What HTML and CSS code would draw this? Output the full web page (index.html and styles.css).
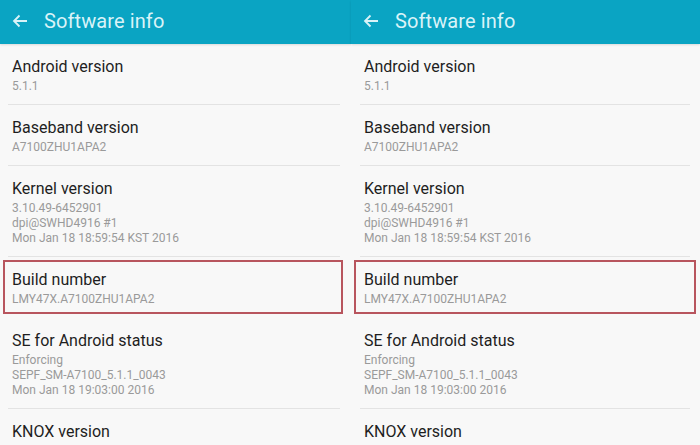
FILE: index.html
```html
<!DOCTYPE html>
<html lang="en">
<head>
    <meta charset="UTF-8">
    <meta name="viewport" content="width=device-width, initial-scale=1.0">
    <title>Software info</title>
    <link rel="stylesheet" href="styles.css">
</head>
<body>

<div class="screens">
    <section class="screen screen-left">
        <header class="appbar">
            <svg class="back" width="16" height="14" viewBox="0 0 16 14">
                <path d="M15 7H2M7.5 1.5L2 7l5.5 5.5" fill="none" stroke="currentColor" stroke-width="1.8"/>
            </svg>
            <h1>Software info</h1>
        </header>
        <ul class="info-list">
            <li class="info-row">
                <div class="info-title">Android version</div>
                <div class="info-value">5.1.1</div>
            </li>
            <li class="info-row">
                <div class="info-title">Baseband version</div>
                <div class="info-value">A7100ZHU1APA2</div>
            </li>
            <li class="info-row">
                <div class="info-title">Kernel version</div>
                <div class="info-value">3.10.49-6452901<br>dpi@SWHD4916 #1<br>Mon Jan 18 18:59:54 KST 2016</div>
            </li>
            <li class="info-row highlighted">
                <div class="info-title">Build number</div>
                <div class="info-value">LMY47X.A7100ZHU1APA2</div>
            </li>
            <li class="info-row">
                <div class="info-title">SE for Android status</div>
                <div class="info-value">Enforcing<br>SEPF_SM-A7100_5.1.1_0043<br>Mon Jan 18 19:03:00 2016</div>
            </li>
            <li class="info-row">
                <div class="info-title">KNOX version</div>
            </li>
        </ul>
    </section>

    <section class="screen screen-right">
        <header class="appbar">
            <svg class="back" width="16" height="14" viewBox="0 0 16 14">
                <path d="M15 7H2M7.5 1.5L2 7l5.5 5.5" fill="none" stroke="currentColor" stroke-width="1.8"/>
            </svg>
            <h1>Software info</h1>
        </header>
        <ul class="info-list">
            <li class="info-row">
                <div class="info-title">Android version</div>
                <div class="info-value">5.1.1</div>
            </li>
            <li class="info-row">
                <div class="info-title">Baseband version</div>
                <div class="info-value">A7100ZHU1APA2</div>
            </li>
            <li class="info-row">
                <div class="info-title">Kernel version</div>
                <div class="info-value">3.10.49-6452901<br>dpi@SWHD4916 #1<br>Mon Jan 18 18:59:54 KST 2016</div>
            </li>
            <li class="info-row highlighted">
                <div class="info-title">Build number</div>
                <div class="info-value">LMY47X.A7100ZHU1APA2</div>
            </li>
            <li class="info-row">
                <div class="info-title">SE for Android status</div>
                <div class="info-value">Enforcing<br>SEPF_SM-A7100_5.1.1_0043<br>Mon Jan 18 19:03:00 2016</div>
            </li>
            <li class="info-row">
                <div class="info-title">KNOX version</div>
            </li>
        </ul>
    </section>
</div>

</body>
</html>
```

FILE: styles.css
```css
body {
    margin: 0;
    padding: 0;
    font-family: Roboto, "Noto Sans", sans-serif;
    background-color: #f8f8f8;
    overflow: hidden;
}

.screens {
    display: grid;
    grid-template-columns: 351px 1fr;
    height: 445px;
    overflow: hidden;
}

.screen {
    background-color: #f8f8f8;
}

.appbar {
    display: flex;
    align-items: center;
    height: 44px;
    box-sizing: border-box;
    padding: 0 0 3px 12px;
    background-color: #0aa4c3;
    color: #d9f3f8;
    box-shadow: 0 1px 2px rgba(0, 0, 0, 0.12);
}

.back {
    flex: none;
    margin-right: 16px;
}

.appbar h1 {
    margin: 0;
    font-size: 20px;
    font-weight: 400;
    letter-spacing: 0.1px;
}

.info-list {
    list-style: none;
    margin: 0;
    padding: 0;
}

.info-row {
    position: relative;
    margin: 0 11px 0 8px;
    padding: 13px 0 10px 4px;
    border-bottom: 1px solid #e3e3e3;
}

.screen-right .info-row {
    margin: 0 10px 0 9px;
}

.info-title {
    font-size: 16px;
    line-height: 20px;
    color: #1e1e1e;
}

.info-value {
    margin-top: 2px;
    font-size: 12px;
    line-height: 15px;
    color: #9a9a9a;
}

.highlighted {
    border-bottom-color: transparent;
}

.highlighted::before {
    content: "";
    position: absolute;
    left: -5px;
    right: -3px;
    top: 3px;
    bottom: 3px;
    border: 2px solid #b8555e;
}

.screen-right .highlighted::before {
    left: -6px;
    right: -6px;
}
```
